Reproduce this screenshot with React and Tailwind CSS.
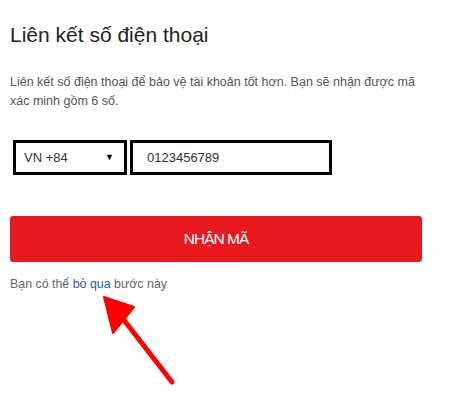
export default function App() {
  return (
    <div className="relative w-[454px] h-[416px] bg-white font-['Liberation_Sans',Arial,sans-serif]">
      <div className="pl-[10px] pt-[21px] w-[430px]">
        <h1 className="text-[21px] leading-[28px] text-[#222]">Liên kết số điện thoại</h1>

        <p className="mt-[24px] text-[12.5px] leading-[19px] text-[#555] w-[412px]">
          Liên kết số điện thoại để bảo vệ tài khoản tốt hơn. Bạn sẽ nhận được mã xác minh gồm 6 số.
        </p>

        {/* country + phone */}
        <div className="mt-[29px] ml-[3px] flex gap-[3px]">
          <div className="w-[114px] h-[35px] border-[3px] border-black flex items-center justify-between pl-[8px] pr-[10px] text-[13px] text-[#333]">
            <span>VN +84</span>
            <span className="text-[9px] text-black">▼</span>
          </div>
          <div className="w-[202px] h-[35px] border-[3px] border-black flex items-center pl-[14px] text-[13px] text-[#333]">
            0123456789
          </div>
        </div>

        <button className="mt-[41px] w-[412px] h-[46px] bg-[#e8191f] rounded-[3px] text-white text-[15.5px] tracking-[-1px] flex items-center justify-center">
          NHẬN MÃ
        </button>

        <p className="mt-[13px] text-[12.4px] leading-[19px] text-[#666]">
          Bạn có thể <span className="text-[#245f9a]">bỏ qua</span> bước này
        </p>
      </div>

      {/* red annotation arrow */}
      <svg className="absolute left-0 top-0" width="454" height="416" viewBox="0 0 454 416">
        <line x1="172" y1="382" x2="120" y2="315" stroke="#f00" strokeWidth="5" strokeLinecap="round" />
        <polygon points="104,297 134,307 113,333" fill="#f00" stroke="#f00" strokeWidth="2" strokeLinejoin="round" />
      </svg>
    </div>
  );
}
